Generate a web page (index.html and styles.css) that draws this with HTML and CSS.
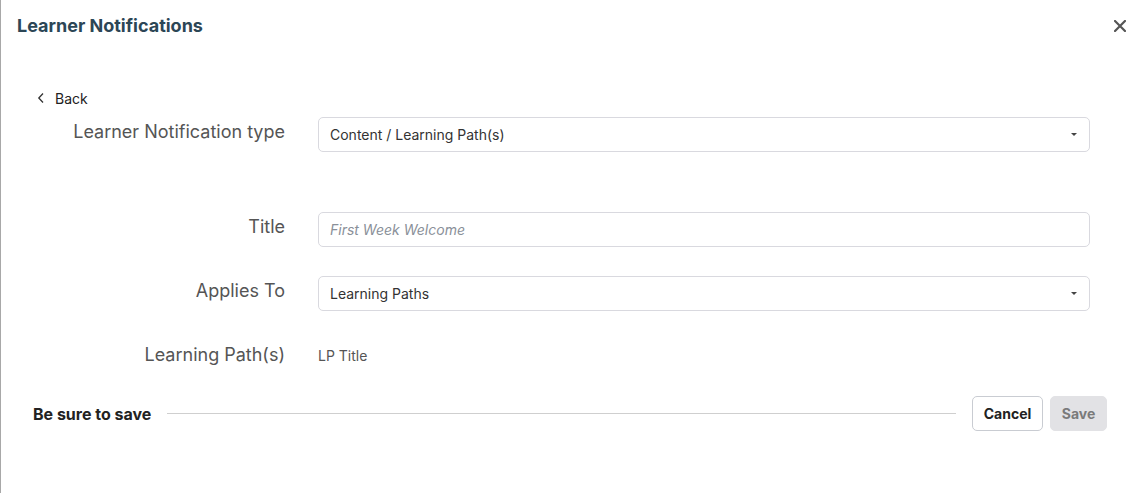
FILE: index.html
```html
<!DOCTYPE html>
<html lang="en">
<head>
<meta charset="utf-8">
<title>Learner Notifications</title>
<link rel="stylesheet" href="styles.css">
</head>
<body>
<div class="modal">
  <div class="header">
    <h1 class="title">Learner Notifications</h1>
    <button class="close" aria-label="Close">
      <svg width="12" height="12" viewBox="0 0 12 12"><path d="M1 1L11 11M11 1L1 11" stroke="#555" stroke-width="2.2" stroke-linecap="square"/></svg>
    </button>
  </div>
  <div class="back">
    <svg class="chev" width="8" height="12" viewBox="0 0 8 12"><path d="M6 1.5L1.8 6L6 10.5" fill="none" stroke="#333" stroke-width="1.3"/></svg>
    <span>Back</span>
  </div>
  <div class="form">
    <div class="row row-first">
      <label class="label">Learner Notification type</label>
      <div class="field select">
        <span>Content / Learning Path(s)</span>
        <span class="caret"></span>
      </div>
    </div>
    <div class="row">
      <label class="label">Title</label>
      <div class="field input"><span class="placeholder">First Week Welcome</span></div>
    </div>
    <div class="row">
      <label class="label">Applies To</label>
      <div class="field select">
        <span>Learning Paths</span>
        <span class="caret"></span>
      </div>
    </div>
    <div class="row">
      <label class="label">Learning Path(s)</label>
      <div class="value">LP Title</div>
    </div>
  </div>
  <div class="footer">
    <span class="save-note">Be sure to save</span>
    <span class="rule"></span>
    <button class="btn btn-cancel">Cancel</button>
    <button class="btn btn-save" disabled>Save</button>
  </div>
</div>
</body>
</html>
```

FILE: styles.css
```css
html, body {
  margin: 0;
  padding: 0;
  background: #ffffff;
}
body {
  font-family: Inter, "Noto Sans", "Liberation Sans", sans-serif;
  color: #333;
}
.modal {
  height: 493px;
  box-sizing: border-box;
  border-left: 1px solid #a8a8a8;
}
.header {
  display: flex;
  justify-content: space-between;
  align-items: center;
  padding: 14px 8px 0 16px;
  height: 23px;
}
.title {
  margin: 0;
  font-size: 18px;
  line-height: 23px;
  font-weight: 700;
  color: #2c4656;
}
.close {
  border: 0;
  background: none;
  padding: 0;
  width: 12px;
  height: 12px;
  display: flex;
}
.back {
  margin-top: 51px;
  padding-left: 36px;
  display: flex;
  align-items: center;
  gap: 10px;
  height: 20px;
  font-size: 14px;
  color: #222;
}
.form {
  margin-top: 9px;
  display: flex;
  flex-direction: column;
  gap: 29px;
}
.row {
  display: flex;
  align-items: flex-start;
}
.row-first {
  margin-bottom: 31px;
}
.label {
  width: 284px;
  text-align: right;
  padding-top: 3px;
  font-size: 18px;
  line-height: 24px;
  color: #555;
  flex-shrink: 0;
}
.field {
  margin-left: 33px;
  width: 772px;
  height: 35px;
  box-sizing: border-box;
  border: 1px solid #d9d9df;
  border-radius: 5px;
  display: flex;
  align-items: center;
  justify-content: space-between;
  padding: 0 12px 0 11px;
  font-size: 14px;
  color: #333;
}
.placeholder {
  font-style: italic;
  color: #8a9099;
}
.caret {
  width: 0;
  height: 0;
  border-left: 3px solid transparent;
  border-right: 3px solid transparent;
  border-top: 3px solid #444;
}
.value {
  margin-left: 33px;
  padding-top: 6px;
  line-height: 20px;
  font-size: 14px;
  color: #555;
}
.footer {
  margin-top: 29px;
  display: flex;
  align-items: center;
  padding: 0 27px 0 32px;
}
.save-note {
  font-size: 16px;
  font-weight: 700;
  color: #222;
}
.rule {
  flex: 1;
  height: 1px;
  background: #cfcfcf;
  margin: 0 16px 0 16px;
}
.btn {
  font-family: inherit;
  height: 35px;
  border-radius: 5px;
  font-size: 14px;
  font-weight: 700;
  padding: 0;
}
.btn-cancel {
  width: 71px;
  background: #fff;
  border: 1px solid #c9ccd2;
  color: #222;
}
.btn-save {
  width: 57px;
  margin-left: 7px;
  background: #e2e2e5;
  border: 1px solid #e2e2e5;
  color: #7a7a7a;
}
```
